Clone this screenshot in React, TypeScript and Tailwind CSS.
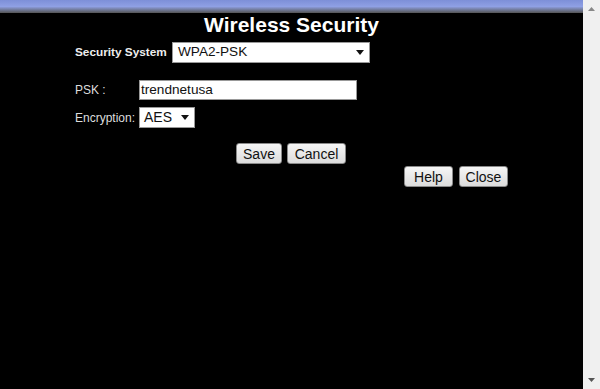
import React from "react";

function Arrow() {
  return (
    <svg width="8" height="5" viewBox="0 0 8 5" className="shrink-0">
      <path d="M0 0 L8 0 L4 5 Z" fill="#111" />
    </svg>
  );
}

function Btn({ children, w }: { children: React.ReactNode; w: string }) {
  return (
    <button
      className={`${w} h-[21px] rounded-[3px] border border-[#8a8a8a] bg-gradient-to-b from-[#f6f6f6] to-[#dcdcdc] text-[14px] leading-none text-[#111]`}
      style={{ fontFamily: '"Liberation Sans", Arial, sans-serif' }}
    >
      {children}
    </button>
  );
}

export default function App() {
  return (
    <div
      className="flex h-[389px] w-[600px] overflow-hidden bg-black"
      style={{ fontFamily: '"Liberation Sans", Arial, sans-serif' }}
    >
      <div className="flex w-[583px] flex-col">
        <div className="h-[13px] bg-gradient-to-b from-[#7d8fd8] via-[#8fa0e4] to-[#555]" />
        <div className="flex h-[22px] items-center justify-center text-[21px] font-bold leading-none text-white">
          Wireless Security
        </div>
        <div className="pl-[75px]">
          <div className="mt-[7px] flex items-center">
            <div className="w-[97px] text-[11.8px] font-bold text-[#eee]">Security System</div>
            <div className="flex h-[21px] w-[198px] items-center justify-between border border-[#999] bg-white pl-[5px] pr-[5px] text-[13.6px] text-[#111]">
              <span>WPA2-PSK</span>
              <Arrow />
            </div>
          </div>
          <div className="mt-[17px] flex items-center">
            <div className="w-[64px] text-[12px] text-[#ddd]">PSK :</div>
            <div className="flex h-[20px] w-[218px] items-center border border-[#999] bg-white pl-[1px] text-[13.6px] text-[#111]">
              trendnetusa
            </div>
          </div>
          <div className="mt-[7px] flex items-center">
            <div className="w-[64px] text-[12px] text-[#ddd]">Encryption:</div>
            <div className="flex h-[21px] w-[56px] items-center justify-between border border-[#999] bg-white pl-[4px] pr-[5px] text-[14px] text-[#111]">
              <span>AES</span>
              <Arrow />
            </div>
          </div>
        </div>
        <div className="mt-[15px] flex gap-[5px] pl-[236px]">
          <Btn w="w-[46px]">Save</Btn>
          <Btn w="w-[59px]">Cancel</Btn>
        </div>
        <div className="mt-[2px] flex gap-[6px] pl-[404px]">
          <Btn w="w-[49px]">Help</Btn>
          <Btn w="w-[49px]">Close</Btn>
        </div>
      </div>
      <div className="flex w-[17px] flex-col items-center justify-between bg-[#f0f0f0] py-[7px]">
        <svg width="7" height="4" viewBox="0 0 7 4">
          <path d="M0 4 L7 4 L3.5 0 Z" fill="#888" />
        </svg>
        <svg width="7" height="4" viewBox="0 0 7 4">
          <path d="M0 0 L7 0 L3.5 4 Z" fill="#555" />
        </svg>
      </div>
    </div>
  );
}
